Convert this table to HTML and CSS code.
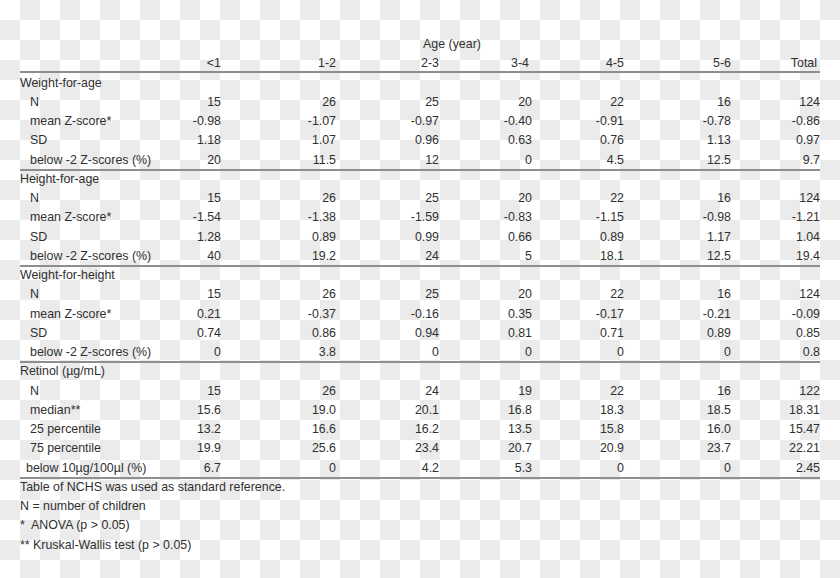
FILE: index.html
```html
<!DOCTYPE html>
<html>
<head>
<meta charset="utf-8">
<link rel="stylesheet" href="styles.css">
</head>
<body>
<div class="sheet">
  <div class="row head">
    <span class="age">Age (year)</span>
  </div>
  <div class="row head">
    <span></span>
    <span class="num">&lt;1</span>
    <span class="num">1-2</span>
    <span class="num">2-3</span>
    <span class="num shift">3-4</span>
    <span class="num">4-5</span>
    <span class="num">5-6</span>
    <span class="num shift">Total</span>
  </div>
  <div class="rule top"></div>

  <div class="row"><span class="group">Weight-for-age</span></div>
  <div class="row"><span class="sub">N</span><span class="num">15</span><span class="num">26</span><span class="num">25</span><span class="num">20</span><span class="num">22</span><span class="num">16</span><span class="num">124</span></div>
  <div class="row"><span class="sub">mean Z-score*</span><span class="num">-0.98</span><span class="num">-1.07</span><span class="num">-0.97</span><span class="num">-0.40</span><span class="num">-0.91</span><span class="num">-0.78</span><span class="num">-0.86</span></div>
  <div class="row"><span class="sub">SD</span><span class="num">1.18</span><span class="num">1.07</span><span class="num">0.96</span><span class="num">0.63</span><span class="num">0.76</span><span class="num">1.13</span><span class="num">0.97</span></div>
  <div class="row"><span class="sub">below -2 Z-scores (%)</span><span class="num">20</span><span class="num">11.5</span><span class="num">12</span><span class="num">0</span><span class="num">4.5</span><span class="num">12.5</span><span class="num">9.7</span></div>
  <div class="rule"></div>

  <div class="row"><span class="group">Height-for-age</span></div>
  <div class="row"><span class="sub">N</span><span class="num">15</span><span class="num">26</span><span class="num">25</span><span class="num">20</span><span class="num">22</span><span class="num">16</span><span class="num">124</span></div>
  <div class="row"><span class="sub">mean Z-score*</span><span class="num">-1.54</span><span class="num">-1.38</span><span class="num">-1.59</span><span class="num">-0.83</span><span class="num">-1.15</span><span class="num">-0.98</span><span class="num">-1.21</span></div>
  <div class="row"><span class="sub">SD</span><span class="num">1.28</span><span class="num">0.89</span><span class="num">0.99</span><span class="num">0.66</span><span class="num">0.89</span><span class="num">1.17</span><span class="num">1.04</span></div>
  <div class="row"><span class="sub">below -2 Z-scores (%)</span><span class="num">40</span><span class="num">19.2</span><span class="num">24</span><span class="num">5</span><span class="num">18.1</span><span class="num">12.5</span><span class="num">19.4</span></div>
  <div class="rule"></div>

  <div class="row"><span class="group">Weight-for-height</span></div>
  <div class="row"><span class="sub">N</span><span class="num">15</span><span class="num">26</span><span class="num">25</span><span class="num">20</span><span class="num">22</span><span class="num">16</span><span class="num">124</span></div>
  <div class="row"><span class="sub">mean Z-score*</span><span class="num">0.21</span><span class="num">-0.37</span><span class="num">-0.16</span><span class="num">0.35</span><span class="num">-0.17</span><span class="num">-0.21</span><span class="num">-0.09</span></div>
  <div class="row"><span class="sub">SD</span><span class="num">0.74</span><span class="num">0.86</span><span class="num">0.94</span><span class="num">0.81</span><span class="num">0.71</span><span class="num">0.89</span><span class="num">0.85</span></div>
  <div class="row"><span class="sub">below -2 Z-scores (%)</span><span class="num">0</span><span class="num">3.8</span><span class="num">0</span><span class="num">0</span><span class="num">0</span><span class="num">0</span><span class="num">0.8</span></div>
  <div class="rule"></div>

  <div class="row"><span class="group">Retinol (µg/mL)</span></div>
  <div class="row"><span class="sub">N</span><span class="num">15</span><span class="num">26</span><span class="num">24</span><span class="num">19</span><span class="num">22</span><span class="num">16</span><span class="num">122</span></div>
  <div class="row"><span class="sub">median**</span><span class="num">15.6</span><span class="num">19.0</span><span class="num">20.1</span><span class="num">16.8</span><span class="num">18.3</span><span class="num">18.5</span><span class="num">18.31</span></div>
  <div class="row"><span class="sub">25 percentile</span><span class="num">13.2</span><span class="num">16.6</span><span class="num">16.2</span><span class="num">13.5</span><span class="num">15.8</span><span class="num">16.0</span><span class="num">15.47</span></div>
  <div class="row"><span class="sub">75 percentile</span><span class="num">19.9</span><span class="num">25.6</span><span class="num">23.4</span><span class="num">20.7</span><span class="num">20.9</span><span class="num">23.7</span><span class="num">22.21</span></div>
  <div class="row"><span class="sub2">below 10µg/100µl (%)</span><span class="num">6.7</span><span class="num">0</span><span class="num">4.2</span><span class="num">5.3</span><span class="num">0</span><span class="num">0</span><span class="num">2.45</span></div>
  <div class="rule"></div>

  <div class="notes">
    <p>Table of NCHS was used as standard reference.</p>
    <p>N = number of children</p>
    <p>*&nbsp; ANOVA (p &gt; 0.05)</p>
    <p>** Kruskal-Wallis test (p &gt; 0.05)</p>
  </div>
</div>
</body>
</html>
```

FILE: styles.css
```css
html, body {
  margin: 0;
  padding: 0;
}

body {
  width: 840px;
  height: 578px;
  overflow: hidden;
  background-color: #ffffff;
  background-image: conic-gradient(#ebebeb 0 25%, #ffffff 0 50%, #ebebeb 0 75%, #ffffff 0);
  background-size: 40px 40px;
  font-family: "Liberation Sans", Arial, sans-serif;
  font-size: 12.4px;
  color: #303030;
}

.sheet {
  width: 800px;
  padding: 35px 20px 0 20px;
}

.row {
  display: grid;
  grid-template-columns: 145px 56px 115px 103px 93px 92px 107px 89px;
  height: 19.25px;
  line-height: 19.25px;
  white-space: nowrap;
}

.row.head {
  height: 19.25px;
}

.age {
  grid-column: 2 / 8;
  text-align: center;
  padding-left: 8px;
}

.num {
  text-align: right;
}

.shift {
  padding-right: 3px;
}

.group {
  grid-column: 1 / 9;
}

.sub {
  padding-left: 10px;
}

.sub2 {
  padding-left: 6px;
}

.rule {
  height: 2px;
  background: #8e8e8e;
  margin: -1px 0;
}

.rule.top {
  margin: -3px 0 1px 0;
}

.notes p {
  margin: 0;
  height: 19.25px;
  line-height: 19.25px;
  white-space: nowrap;
}
```
